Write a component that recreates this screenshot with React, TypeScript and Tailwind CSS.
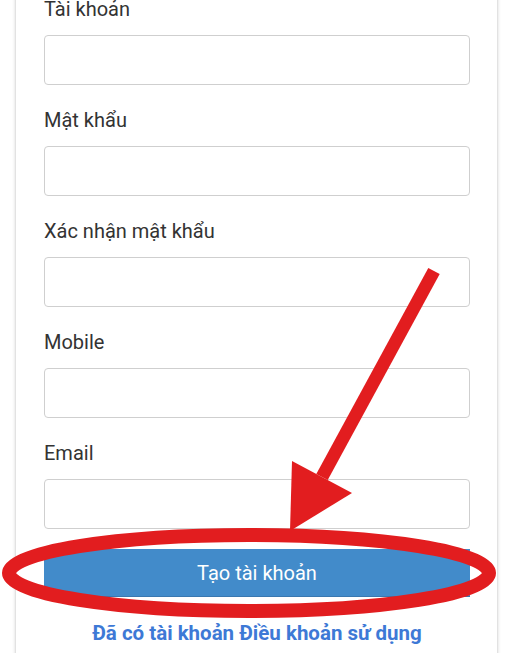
import React from 'react'

const fields = ['Tài khoản', 'Mật khẩu', 'Xác nhận mật khẩu', 'Mobile', 'Email']

function Annotation() {
  // red marker drawn over the screenshot
  return (
    <svg
      className="absolute left-0 top-0 pointer-events-none"
      width="512"
      height="653"
      viewBox="0 0 512 653"
    >
      <line x1="434" y1="271" x2="322" y2="477" stroke="#e21d1f" strokeWidth="13" />
      <polygon points="292,461 352,493 290,531" fill="#e21d1f" />
      <ellipse cx="249" cy="573" rx="240" ry="38" fill="none" stroke="#e21d1f" strokeWidth="14" />
    </svg>
  )
}

export default function App() {
  return (
    <div className="relative w-[512px] h-[653px] overflow-hidden bg-white font-['Roboto',sans-serif]">
      <div className="ml-[15px] mr-[14px] -mt-[6px] bg-white border-x border-[#e2e2e2] shadow-[0_0_3px_rgba(0,0,0,0.15)] pl-[28px] pr-[27px] pb-[20px]">
        {fields.map((label) => (
          <div key={label} className="pb-[20px]">
            <label className="block pt-[1px] text-[20px] leading-[28px] text-[#333] mb-[12px]">{label}</label>
            <input
              type="text"
              className="block w-full h-[50px] border border-[#cfcfcf] rounded-[4px] bg-white px-3 text-[18px] outline-none"
            />
          </div>
        ))}
        <button className="w-full h-[48px] bg-[#428bca] border-b border-[#3a78b0] text-white text-[20px] leading-[28px]">
          Tạo tài khoản
        </button>
        <div className="mt-[22px] text-center text-[20.5px] leading-[28px] font-bold text-[#3d79d6]">
          <a href="#">Đã có tài khoản</a> <a href="#">Điều khoản sử dụng</a>
        </div>
      </div>
      <Annotation />
    </div>
  )
}
